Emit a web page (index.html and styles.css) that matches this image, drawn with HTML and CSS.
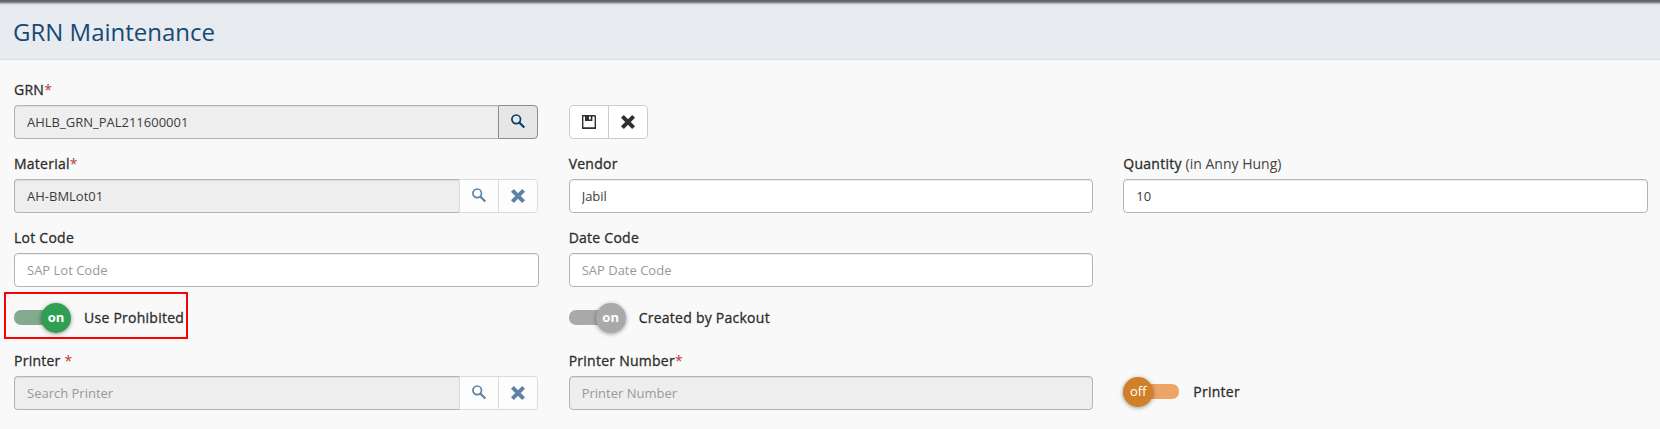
FILE: index.html
```html
<!DOCTYPE html>
<html lang="en">
<head>
<meta charset="utf-8">
<title>GRN Maintenance</title>
<link rel="stylesheet" href="styles.css">
</head>
<body>
<svg class="sprite" aria-hidden="true">
  <symbol id="search" viewBox="0 0 16 16"><circle cx="6.2" cy="5.3" r="4.3" fill="none" stroke="currentColor" stroke-width="1.7"/><path d="M9.3 8.4L14.3 13.6" stroke="currentColor" stroke-width="2.2"/></symbol>
  <symbol id="close" viewBox="0 0 16 16"><path d="M2.4 2.4L13.6 13.6M13.6 2.4L2.4 13.6" stroke="currentColor" stroke-width="4"/></symbol>
  <symbol id="save" viewBox="0 0 16 16"><path fill="currentColor" fill-rule="evenodd" d="M1 1H14L15 2V15H1ZM2.4 2.4V13.2H13.6V2.8L13 2.4H11.4V7H4V2.4ZM8 2.4V5.4H9.7V2.4Z"/></symbol>
</svg>
<header class="page-header"><h1 class="title">GRN Maintenance</h1></header>
<main class="form">
  <div class="field">
    <label class="label">GRN<span class="required">*</span></label>
    <div class="group"><input class="input readonly" value="AHLB_GRN_PAL211600001" readonly><button class="button active" aria-label="Search"><svg class="icon"><use href="#search"/></svg></button></div>
  </div>
  <div class="field actions">
    <div class="group"><button class="button first" aria-label="Save"><svg class="icon"><use href="#save"/></svg></button><button class="button" aria-label="Clear"><svg class="icon"><use href="#close"/></svg></button></div>
  </div>
  <div class="field"></div>

  <div class="field">
    <label class="label">Material<span class="required">*</span></label>
    <div class="group"><input class="input readonly" value="AH-BMLot01" readonly><button class="button disabled" aria-label="Search"><svg class="icon"><use href="#search"/></svg></button><button class="button disabled" aria-label="Clear"><svg class="icon"><use href="#close"/></svg></button></div>
  </div>
  <div class="field"><label class="label">Vendor</label><input class="input" value="Jabil"></div>
  <div class="field"><label class="label">Quantity <span class="unit">(in Anny Hung)</span></label><input class="input" value="10"></div>

  <div class="field"><label class="label">Lot Code</label><input class="input" placeholder="SAP Lot Code"></div>
  <div class="field"><label class="label">Date Code</label><input class="input" placeholder="SAP Date Code"></div>
  <div class="field"></div>

  <div class="switch-row highlighted"><span class="switch on"><span class="knob">on</span></span><span class="switch-label">Use Prohibited</span></div>
  <div class="switch-row"><span class="switch on locked"><span class="knob">on</span></span><span class="switch-label">Created by Packout</span></div>
  <div class="switch-row"></div>

  <div class="field">
    <label class="label">Printer <span class="required">*</span></label>
    <div class="group"><input class="input readonly" placeholder="Search Printer" readonly><button class="button disabled" aria-label="Search"><svg class="icon"><use href="#search"/></svg></button><button class="button disabled" aria-label="Clear"><svg class="icon"><use href="#close"/></svg></button></div>
  </div>
  <div class="field"><label class="label">Printer Number<span class="required">*</span></label><input class="input readonly" placeholder="Printer Number" readonly></div>
  <div class="field actions"><div class="switch-row"><span class="switch off"><span class="knob">off</span></span><span class="switch-label">Printer</span></div></div>
</main>
</body>
</html>
```
FILE: styles.css
```css
*, *::before { box-sizing: border-box; }
body { margin: 0; background: #f9f9f9; color: #2d2d2d; font: 14px/20px "Open Sans", sans-serif; overflow: hidden; }
.sprite { display: none; }
.page-header {
  height: 60px;
  padding: 15px 13px 0;
  border-bottom: 1px solid #d9dde9;
  background: linear-gradient(#606166 0, #6c6d71 2px, #a3a6ac 3px, #cfd2d8 4px, #e1e4ea 5px, #e8ebf0 7px);
}
.title { margin: 0; color: #164a75; font-size: 24px; line-height: 33px; font-weight: 400; }
.form { display: grid; grid-template-columns: repeat(3, 1fr); column-gap: 30px; row-gap: 15px; padding: 20px 12px 19px 14px; }
.label { display: block; margin-bottom: 5px; letter-spacing: .25px; -webkit-text-stroke: .3px currentColor; }
.required { color: #c03838; -webkit-text-stroke: 0; }
.unit { color: #444; letter-spacing: 0; -webkit-text-stroke: 0; }
.group { display: flex; padding-right: 1px; }
.input {
  display: block; width: 100%; height: 34px; min-width: 0; padding: 6px 12px;
  border: 1px solid #b4b4b6; border-radius: 4px; background: #fff;
  box-shadow: inset 0 1px 1px rgba(0, 0, 0, .075);
  color: #3c3c3c; font: 13px/20px "Open Sans", sans-serif; outline: 0;
}
.input::placeholder { color: #999; opacity: 1; }
.readonly { background: #eee; }
.group .input { flex: 1; border-right: 0; border-radius: 4px 0 0 4px; }
.button {
  display: flex; align-items: center; justify-content: center; flex: none;
  width: 40px; height: 34px; margin-left: -1px; padding: 0 0 1px;
  border: 1px solid #ccc; background: #fff; color: #303030;
}
.group .input + .button { margin-left: 0; }
.button:last-child { border-radius: 0 4px 4px 0; }
.button.first { margin-left: 0; border-radius: 4px 0 0 4px; }
.button.active { border-color: #8c8c8c; background: #e6e6e6; color: #083c68; }
.button.disabled { border-color: #dbdbdb; background: #fdfdfd; color: #5d82a8; }
.icon { width: 16px; height: 16px; }
.actions { padding-top: 25px; }
.switch-row { position: relative; display: flex; height: 34px; align-items: flex-start; }
.highlighted::before { content: ""; position: absolute; left: -10px; top: -10px; width: 184px; height: 47px; border: 2px solid #f00; }
.switch { display: flex; width: 56px; height: 15px; margin-top: 8px; align-items: center; border-radius: 7px; background: #82aa8f; }
.knob { flex: none; width: 30px; height: 30px; border-radius: 50%; background: #309f52; box-shadow: 0 1px 4px rgba(0, 0, 0, .4); color: #fff; font-size: 13px; line-height: 28px; font-weight: 700; text-align: center; }
.switch.on { justify-content: flex-end; }
.on .knob { margin-right: -1px; }
.switch.locked, .locked .knob { background: #a9a9a9; }
.switch.off { background: #eda466; }
.off .knob { background: #d17f28; font-weight: 400; }
.switch-label { margin: 6px 0 0 14px; letter-spacing: .25px; -webkit-text-stroke: .3px currentColor; }
```
